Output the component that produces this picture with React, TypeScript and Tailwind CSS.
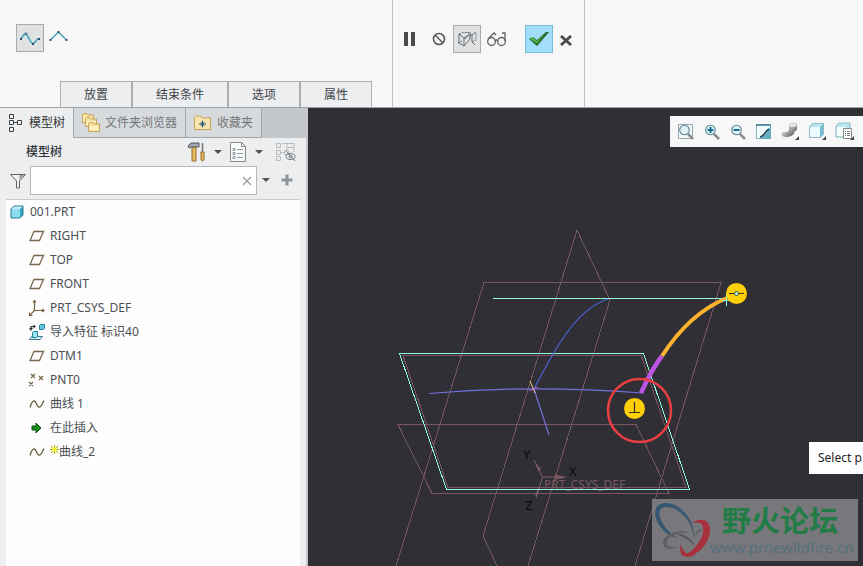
import { useState } from "react";
import type { ReactNode } from "react";

const uiFont = "font-['Noto_Sans','Noto_Sans_CJK_SC',sans-serif]";

function CurveIcon() {
  return (
    <svg width="22" height="16" viewBox="0 0 22 16" fill="none">
      <path d="M2 9C4 5 6 3 8 5C10 8 12 14 14 13.500C17 13 17 9 20 8.500" stroke="#46a7b9" strokeWidth="1.6" />
      <path d="M1 8l2 2m0-2l-2 2M6 2.500l2 2m0-2l-2 2M13 13l2 2m0-2l-2 2M19 8l2 2m0-2l-2 2" stroke="#223f58" strokeWidth=".9" />
    </svg>
  );
}

function PolylineIcon() {
  return (
    <svg width="20" height="14" viewBox="0 0 20 14" fill="none">
      <path d="M1.500 11L9.500 3L17.500 11" stroke="#46a7b9" strokeWidth="1.5" />
      <path d="M.5 10l2 2m0-2l-2 2M8.500 2l2 2m0-2l-2 2M16.500 10l2 2m0-2l-2 2" stroke="#223f58" strokeWidth=".9" />
    </svg>
  );
}

function PlaneIcon() {
  return (
    <svg width="16" height="16" viewBox="0 0 16 16" fill="none">
      <path d="M5 3.500H14.500L10.500 12.500H1Z" stroke="#79694e" strokeWidth="1.3" />
    </svg>
  );
}

function CubeIcon() {
  return (
    <svg width="14" height="14" viewBox="0 0 14 14">
      <path d="M1 4L4 1H13V10L10 13H1Z" fill="#39a5c0" />
      <path d="M1 4L4 1H13L10 4Z" fill="#c5f1fa" />
      <path d="M1 4H10V13H1Z" fill="#8adcef" />
      <path d="M1 4L4 1H13V10L10 13H1Z" fill="none" stroke="#307b93" />
    </svg>
  );
}

function CsysIcon() {
  return (
    <svg width="18" height="18" viewBox="0 0 18 18" fill="none" stroke="#766040" strokeWidth="1.2">
      <path d="M6.500 2V11.500H16M6.500 11.500L2 16M5 3.500L6.500 1.500L8 3.500M14 10L16 11.500L14 13M1.500 13.500V16.500H4.500" />
    </svg>
  );
}

function ImportIcon() {
  return (
    <svg width="18" height="18" viewBox="0 0 18 18">
      <path d="M3 6.500V3.500H7" fill="none" stroke="#333" strokeWidth="1.200" />
      <path d="M5.500 1.500L8 3.500L5.500 5.500ZM1 5L3 8L5 5Z" fill="#333" />
      <path d="M11.500 2.500l1-1h4v4l-1 1h-4z" fill="#67c7df" stroke="#267d9d" />
      <path d="M1.500 16.500L3.500 13.500H14.500L12 16.500Z" fill="#d6eff4" stroke="#387b92" />
      <path d="M4.500 9.500l1-1h4v5l-1 1h-4z" fill="#9ce5f3" stroke="#267d9d" />
    </svg>
  );
}

function PointsIcon() {
  return (
    <svg width="18" height="18" viewBox="0 0 18 18" fill="none" stroke="#756346" strokeWidth="1.2">
      <path d="M3 3l4 4m0-4L3 7M11 5l4 4m0-4l-4 4M1 11l4 4m0-4l-4 4" />
    </svg>
  );
}

function WaveIcon() {
  return (
    <svg width="16" height="16" viewBox="0 0 16 16" fill="none">
      <path d="M1 11.500C3 5 5 3 7 7C9 12 11 14 15 4.500" stroke="#655a3d" strokeWidth="1.3" />
    </svg>
  );
}

function ArrowIcon() {
  return (
    <svg width="14" height="14" viewBox="0 0 14 14">
      <path d="M2 5h4V2l5 5-5 5V9H2z" fill="#178a17" stroke="#0a5b0a" />
    </svg>
  );
}

function Caret() {
  return (
    <svg width="8" height="4" viewBox="0 0 8 4">
      <path d="M0 0H8L4 4Z" fill="#505356" />
    </svg>
  );
}

function FolderShape({ x, y }: { x: number; y: number }) {
  return (
    <g transform={`translate(${x} ${y})`}>
      <path d="M.5 9.500V1.500L1.500.5H5L6 2H11.500V9.500Z" fill="#f8df9b" stroke="#c5a35c" />
      <path d="M1.500 4H10.500V8.500H1.500Z" fill="#fff1c5" />
    </g>
  );
}

const treeItems: { label: string; icon: ReactNode; isNew?: boolean }[] = [
  { label: "RIGHT", icon: <PlaneIcon /> },
  { label: "TOP", icon: <PlaneIcon /> },
  { label: "FRONT", icon: <PlaneIcon /> },
  { label: "PRT_CSYS_DEF", icon: <CsysIcon /> },
  { label: "导入特征 标识40", icon: <ImportIcon /> },
  { label: "DTM1", icon: <PlaneIcon /> },
  { label: "PNT0", icon: <PointsIcon /> },
  { label: "曲线 1", icon: <WaveIcon /> },
  { label: "在此插入", icon: <ArrowIcon /> },
  { label: "曲线_2", icon: <WaveIcon />, isNew: true },
];

function Ribbon() {
  return (
    <header className="flex h-27 shrink-0 border-b border-[#a0a2a5] bg-[#f7f7f7]">
      <div className="flex w-[393px] shrink-0 flex-col justify-between border-r border-[#bfc0c2]">
        <div className="flex gap-1 pt-6 pl-4">
          <button aria-label="样条曲线" className="flex size-7 items-center justify-center border border-[#a8aaac] bg-[#dfe1e3]">
            <CurveIcon />
          </button>
          <button aria-label="折线" className="flex h-6 w-[22px] items-center justify-center">
            <PolylineIcon />
          </button>
        </div>
        <nav className="ml-15 flex self-start border-t border-l border-[#acaeb1] text-xs text-[#404346]">
          <button className="h-[25px] w-[72px] border-r-2 border-[#acaeb1] bg-[#eceef0]">放置</button>
          <button className="h-[25px] w-24 border-r-2 border-[#acaeb1] bg-[#eceef0]">结束条件</button>
          <button className="h-[25px] w-[72px] border-r-2 border-[#acaeb1] bg-[#eceef0]">选项</button>
          <button className="h-[25px] w-[71px] border-r border-[#acaeb1] bg-[#eceef0]">属性</button>
        </nav>
      </div>
      <div className="flex w-48 shrink-0 items-start border-r border-[#bfc0c2] pt-[25px] pl-2">
        <button aria-label="暂停" className="mr-3.5 flex h-7 w-4 items-center justify-end">
          <svg width="13" height="14"><path d="M0 0H4V14H0ZM7 0H11V14H7Z" fill="#484a4c" /></svg>
        </button>
        <button aria-label="无预览" className="mr-1.5 flex h-7 w-4 items-center justify-center">
          <svg width="14" height="14" fill="none" stroke="#55585a" strokeWidth="1.6">
            <circle cx="7" cy="7" r="5.500" /><path d="M3 3L11 11" />
          </svg>
        </button>
        <button aria-label="分离预览" className="mr-1 flex size-7 items-center justify-center border border-[#a8aaac] bg-[#dfe1e3]">
          <svg width="20" height="16" viewBox="0 0 20 16" fill="none" stroke="#4d5053" strokeWidth=".8">
            <path d="M2 3V12L7 15V7L2 3M7 7L13 4M7 15L13 8V1M15 4V11L18 14M13 4L15 4L19 1" />
            <path d="M2 3L6 1.500H12M1 12L5 10M8 8L12 2M15 11L19 9V2" strokeDasharray="2 1" />
          </svg>
        </button>
        <button aria-label="预览" className="mr-4 flex h-7 w-6 items-center justify-center">
          <svg width="22" height="15" viewBox="0 0 22 15" fill="none" stroke="#606366" strokeWidth="1.3">
            <ellipse cx="5.500" cy="9.500" rx="3.800" ry="4" /><ellipse cx="15.500" cy="9.500" rx="3.800" ry="4" />
            <path d="M2 7L8 1L10 3M9 9q1-2 3 0M19 9V1H16" />
          </svg>
        </button>
        <button aria-label="确定" className="mr-1.5 flex size-7 items-center justify-center border border-[#79bddd] bg-[#a2def9]">
          <svg width="20" height="16" viewBox="0 0 20 16">
            <path d="M0 8L4 6L8 9L17 1H20L8 15Z" fill="#23652b" />
            <path d="M1 8L4 6L8 10L17 1.500L8 12.500Z" fill="#49b647" />
          </svg>
        </button>
        <button aria-label="取消" className="flex h-7 w-4 items-center justify-start pt-0.5">
          <svg width="14" height="11" stroke="#484a4c" strokeWidth="2.800"><path d="M2 1L12 10M12 1L2 10" /></svg>
        </button>
      </div>
    </header>
  );
}

function ModelTreePanel() {
  const [filter, setFilter] = useState("");
  return (
    <aside className="flex w-[308px] shrink-0 flex-col border-r-2 border-[#c5c8ca] bg-[#eceef0] text-xs text-[#4b4e51]">
      <div className="flex h-[30px] bg-[#c5c8ca]">
        <button className="flex w-[73px] items-center gap-1.5 bg-[#eceef0] pl-2 text-[#333638]">
          <svg width="15" height="20" viewBox="0 0 15 20" fill="none" stroke="#3d4043">
            <path d="M1.500 1.500h4v4h-4zM1.500 7.500h4v4h-4zM1.500 14.500h4v4h-4zM9.500 7.500h4v4h-4zM6 9.500h3" />
          </svg>
          模型树
        </button>
        <button className="flex w-28 items-center gap-1 border-b border-l border-[#a2a5a8] bg-[#d7dadc] pl-2 text-[#73777b]">
          <svg width="19" height="20" viewBox="0 0 19 20">
            <FolderShape x={0} y={0} /><FolderShape x={3} y={4} /><FolderShape x={6} y={9} />
          </svg>
          文件夹浏览器
        </button>
        <button className="flex w-[77px] items-center gap-1.5 border-x border-b border-[#a2a5a8] bg-[#d7dadc] pl-2 text-[#73777b]">
          <svg width="17" height="16" viewBox="0 0 17 16">
            <path d="M.5 14.500V2.500L2 1H7L8 3H16.500V14.500Z" fill="#f8e4ae" stroke="#c5a35c" />
            <path d="M8.500 5.500v7M5 9h7M6.500 7l4 4m0-4l-4 4" stroke="#174f78" strokeWidth=".9" />
          </svg>
          收藏夹
        </button>
      </div>
      <div className="flex h-7 items-center pl-[26px]">
        <h2 className="w-[161px] font-medium text-[#333638]">模型树</h2>
        <button aria-label="设置" className="flex items-center gap-2">
          <svg width="19" height="20" viewBox="0 0 19 20">
            <path d="M5 5h4v14H5z" fill="#e5ba5e" stroke="#956b25" />
            <path d="M1 4L4 1h8v4H4L2 6z" fill="#a2a8ad" stroke="#53585c" />
            <path d="M14 10h3v8l-1.500 1L14 18z" fill="#e5ba5e" stroke="#956b25" />
            <path d="M15.500 1v9" stroke="#72777b" strokeWidth="1.5" />
          </svg>
          <Caret />
        </button>
        <button aria-label="显示" className="ml-2 flex items-center gap-2">
          <svg width="17" height="20" viewBox="0 0 17 20" fill="none" stroke="#84888b">
            <path d="M.5.5h11l4 4v15H.5z" fill="#fafafa" /><path d="M11.500.5v4h4" />
            <path d="M7 7.500h6M7 11.500h6M7 15.500h6M3 6.500h2v2H3zM3 10.500h2v2H3zM3 14.500h2v2H3z" stroke="#6f8790" strokeWidth=".8" />
          </svg>
          <Caret />
        </button>
        <button aria-label="隐藏树列" className="ml-3">
          <svg width="22" height="20" viewBox="0 0 22 20" fill="none" stroke="#b9bcbe">
            <path d="M1.500 1.500h4v4h-4zM1.500 8.500h4v4h-4zM1.500 14.500h4v4h-4zM9.500 8.500h4v4h-4zM6 10.500h3M7 1.500h12M12 1v7M19 1v9M13 5.500h6" />
            <ellipse cx="15.500" cy="14.500" rx="4.500" ry="3" stroke="#777b7e" /><circle cx="15.500" cy="14.500" r="1.500" stroke="#777b7e" /><path d="M11 9l9 10" stroke="#777b7e" />
          </svg>
        </button>
      </div>
      <div className="flex h-[33px] items-start pl-2.5">
        <svg className="mt-2" width="16" height="15" viewBox="0 0 16 15">
          <path d="M.5.5h15L9.500 7v7h-3V7z" fill="#eee" stroke="#606467" /><path d="M9 6l5-5h-4z" fill="#92979a" />
        </svg>
        <div className="ml-1 flex h-[29px] w-[227px] items-center border border-[#b7babd] bg-white">
          <input
            aria-label="筛选模型树"
            className="h-full min-w-0 flex-1 px-2 outline-none"
            value={filter}
            onChange={(event) => setFilter(event.target.value)}
          />
          <button aria-label="清除" className="mr-1" onClick={() => setFilter("")}>
            <svg width="10" height="10" stroke="#96999c" strokeWidth="1.2"><path d="M1 1L9 9M9 1L1 9" /></svg>
          </button>
        </div>
        <button aria-label="筛选选项" className="flex h-7 w-[18px] items-center justify-center"><Caret /></button>
        <button aria-label="添加" className="ml-1.5 flex h-7 w-3 items-center">
          <svg width="12" height="12" stroke="#909396" strokeWidth="3"><path d="M6 0.500V11.500M.5 6H11.500" /></svg>
        </button>
      </div>
      <div className="mr-[6px] ml-1.5 flex-1 border-t border-[#c9ccce] bg-[#fdfdfd]">
        <div className="flex h-6 items-center gap-1.5 pl-1"><CubeIcon />001.PRT</div>
        <ul className="pl-[22px]">
          {treeItems.map((item) => (
            <li key={item.label} className="flex h-6 items-center whitespace-nowrap">
              <span className="mr-1 flex w-[18px] shrink-0 items-center justify-center">{item.icon}</span>
              {item.isNew && (
                <svg className="mb-1.5" width="9" height="9" viewBox="0 0 9 9" stroke="#a6a600" strokeWidth="1">
                  <path d="M4.500 0v9M0 4.500h9M1 1l7 7M8 1L1 8" /><rect x="3" y="3" width="3" height="3" fill="#ffff26" stroke="#eeee20" />
                </svg>
              )}
              {item.label}
            </li>
          ))}
        </ul>
      </div>
    </aside>
  );
}

function Magnifier({ sign }: { sign?: string }) {
  return (
    <svg width="18" height="18" viewBox="0 0 18 18" fill="none">
      {!sign && <path d="M1.500 1.500h14v14h-14z" stroke="#90aab4" />}
      <path d="M11 11l5 5" stroke="#8a8e91" strokeWidth="2.500" />
      <circle cx="7.500" cy="7" r="4.800" fill="#e1f4f8" stroke="#5e8495" strokeWidth="1.1" />
      {sign && <path d={sign} stroke="#176d91" strokeWidth="2" />}
    </svg>
  );
}

function ViewToolbar() {
  return (
    <div className="relative mt-2 ml-auto flex h-[31px] w-[193px] items-center gap-2 bg-[#f7f7f7] pl-[7px]">
      <button aria-label="重新调整"><Magnifier /></button>
      <button aria-label="放大"><Magnifier sign="M4.500 7h6M7.500 4v6" /></button>
      <button aria-label="缩小"><Magnifier sign="M4.500 7h6" /></button>
      <button aria-label="重画">
        <svg width="18" height="18" viewBox="0 0 18 18">
          <path d="M1.500 1.500h14v14h-14z" fill="#f2fafc" stroke="#8eb5bf" />
          <path d="M16 2V16H2C9 15 12 10 16 2Z" fill="#63afbf" />
          <path d="M1 2h15" stroke="#3b7890" strokeWidth="1.500" />
          <path d="M5 14C9 14 9 9 14 6" fill="none" stroke="#173f53" strokeWidth="1.500" />
        </svg>
      </button>
      <button aria-label="渲染选项">
        <svg width="19" height="19" viewBox="0 0 19 19">
          <defs><linearGradient id="metal" x2="1" y2="1"><stop stopColor="#fff" /><stop offset=".5" stopColor="#aaa" /><stop offset="1" stopColor="#444" /></linearGradient></defs>
          <path d="M8 2q5-3 8 0v6q-3 1-3 4-5 5-12 2v-4q5 1 7-2z" fill="url(#metal)" /><ellipse cx="12" cy="3" rx="3.500" ry="2" fill="#e3e3e3" /><path d="M18 14v4h-4z" fill="#444" />
        </svg>
      </button>
      <button aria-label="显示样式">
        <svg width="19" height="19" viewBox="0 0 19 19">
          <path d="M1 5l4-4h11v11l-4 4H1z" fill="#71bccf" /><path d="M1 5h11v11H1z" fill="#eafaff" /><path d="M1 5l4-4h11l-4 4z" fill="#b8e9f2" /><path d="M1.500 5l4-3.500h10V12L12 15.500H1.500z" fill="none" stroke="#8fbac5" /><path d="M18 14v4h-4z" fill="#444" />
        </svg>
      </button>
      <button aria-label="已保存方向">
        <svg width="19" height="19" viewBox="0 0 19 19">
          <path d="M1 4l3-3h11v11l-3 3H1z" fill="#b8e9f2" stroke="#8fbac5" /><path d="M2 5h9v9H2z" fill="#f7fdff" /><path d="M8.500 6.500h8v10h-8z" fill="#fff" stroke="#85898c" /><path d="M10 9.500h1m1 0h3m-5 2h1m1 0h3m-5 2h1m1 0h3" stroke="#777" /><path d="M19 14v4h-4z" fill="#444" />
        </svg>
      </button>
    </div>
  );
}

function ModelDrawing() {
  return (
    <svg className="absolute top-0 left-0" width="555" height="458" viewBox="308 108 555 458" fill="none">
      <g stroke="#76575f" shapeRendering="crispEdges">
        <path d="M396 566L484 282.500H721L635 566" />
        <path d="M528 566L610 300L577 230L483 536L497 566" />
        <path d="M398 424.500H636L669 493.500H432Z" />
        <path d="M403 355.500H641L686 487.500H448Z" />
      </g>
      <text x="544" y="489" fontSize="12" fill="#785760" className={uiFont}>PRT_CSYS_DEF</text>
      <g stroke="#845f68">
        <path d="M534 460L542.500 477H566M542.500 477L536 498" />
        <path d="M536 464L539 470L540 467M555 475L562 477.500L555 479M539 488L536 496" strokeWidth="1.500" />
      </g>
      <g stroke="#91ffdc" strokeWidth="1" shapeRendering="crispEdges">
        <path d="M399.500 353.500H643.500L689.500 489.500H446.500Z" /><path d="M493 298.500H727" />
      </g>
      <path d="M608 299C580 308 560 338 534 389" stroke="#4c65d8" strokeWidth="1.2" />
      <path d="M429 393.500C490 388 565 387 642 393M534 389L549 435" stroke="#7170df" strokeWidth="1.2" />
      <path d="M530 381L535 393" stroke="#f2d37c" /><path d="M529 391L538 387" stroke="#b95fc8" />
      <path d="M662 356C680 328 700 309 727 298" stroke="#ffb22c" strokeWidth="4" />
      <path d="M641 393C646 382 654 366 662 356" stroke="#bb55e4" strokeWidth="4.500" />
      <path d="M726.500 294V306M722 300.500H731" stroke="#91ffdc" />
      <circle cx="736.500" cy="293.500" r="10.500" fill="#ffd006" />
      <path d="M729 293.500H744" stroke="#332f20" /><circle cx="736.500" cy="293.500" r="2" fill="#d3fbe6" stroke="#315457" />
      <circle cx="639.500" cy="410.500" r="31.500" stroke="#e93f42" strokeWidth="2.500" />
      <circle cx="634.500" cy="408.500" r="10.500" fill="#ffd006" />
      <path d="M634.500 402V412M629 412.500H640" stroke="#332f20" strokeWidth="1.200" />
      <g fontSize="13" fill="#08080a" className={uiFont}>
        <text x="523" y="459">Y</text><text x="569" y="476">X</text><text x="525" y="510">Z</text>
      </g>
    </svg>
  );
}

function Watermark() {
  return (
    <div className="absolute right-[5px] bottom-[5px] flex h-[62px] w-[206px] bg-[#78777b]">
      <svg className="shrink-0" width="58" height="62" viewBox="0 0 58 62">
        <path fillRule="evenodd" d="M41 39C45 25 30 4 14 4C-6 4 4 35 26 39C10 31 0 8 14 8C27 7 43 25 41 39Z" fill="#345671" />
        <path d="M38 26C48 17 59 20 58 33C56 47 43 60 29 56C39 56 49 43 51 34C53 24 46 21 38 26Z" fill="#a7303c" />
        <path d="M29 45C25 59 37 61 45 54C37 57 31 55 29 45Z" fill="#a7303c" />
        <path d="M38 34C25 29 11 36 11 44C11 50 18 51 25 48C17 48 13 47 15 42C18 36 27 33 38 34Z" fill="#5d6167" />
        <path d="M23 35C32 34 39 39 43 47C37 41 31 37 23 35Z" fill="#505862" />
        <path d="M42 37Q44 31 52 29Q46 33 42 37Z" fill="#505862" />
      </svg>
      <div className="flex flex-col whitespace-nowrap">
        <strong className="ml-3 mt-0.5 font-['Noto_Sans_CJK_SC',sans-serif] text-[29px] leading-9 text-[#217c45]">野火论坛</strong>
        <span className="font-['Noto_Sans',sans-serif] text-[15px] leading-5 text-[#53707d]">www.proewildfire.cn</span>
      </div>
    </div>
  );
}

export default function App() {
  return (
    <div className={`flex h-screen flex-col overflow-hidden bg-[#302f36] ${uiFont}`}>
      <Ribbon />
      <div className="flex min-h-0 flex-1">
        <ModelTreePanel />
        <main className="relative flex min-w-0 flex-1 items-start overflow-hidden bg-[#302f36]">
          <ModelDrawing />
          <ViewToolbar />
          <div role="tooltip" className="absolute top-[334px] right-0 flex h-8 w-[54px] items-center overflow-hidden bg-white pl-[9px] text-xs whitespace-nowrap text-[#222]">
            Select p
          </div>
          <Watermark />
        </main>
      </div>
    </div>
  );
}
